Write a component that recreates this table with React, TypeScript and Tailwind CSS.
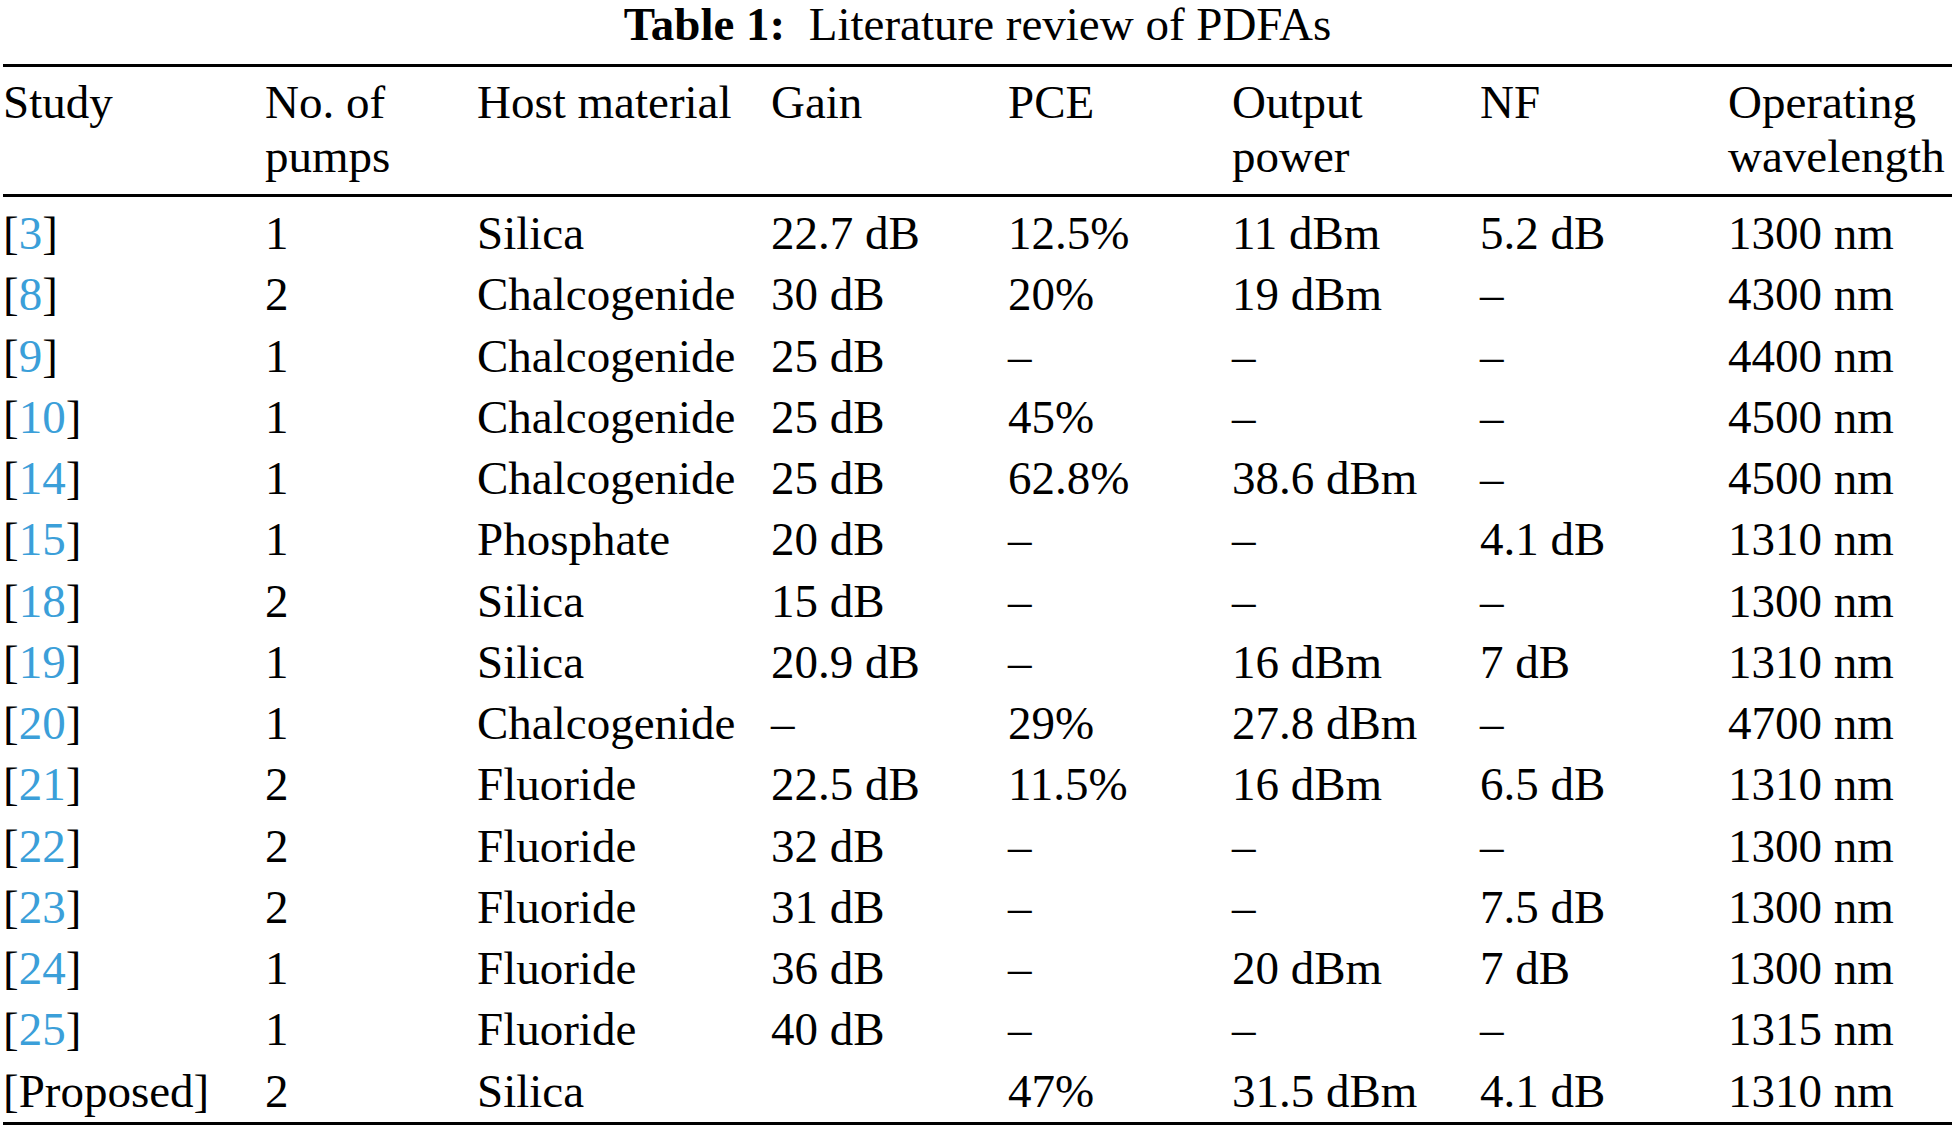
type Row = {
  ref: string;
  link: boolean;
  pumps: string;
  host: string;
  gain: string;
  pce: string;
  output: string;
  nf: string;
  wavelength: string;
};

const D = "\u2013";

const rows: Row[] = [
  { ref: "3", link: true, pumps: "1", host: "Silica", gain: "22.7 dB", pce: "12.5%", output: "11 dBm", nf: "5.2 dB", wavelength: "1300 nm" },
  { ref: "8", link: true, pumps: "2", host: "Chalcogenide", gain: "30 dB", pce: "20%", output: "19 dBm", nf: D, wavelength: "4300 nm" },
  { ref: "9", link: true, pumps: "1", host: "Chalcogenide", gain: "25 dB", pce: D, output: D, nf: D, wavelength: "4400 nm" },
  { ref: "10", link: true, pumps: "1", host: "Chalcogenide", gain: "25 dB", pce: "45%", output: D, nf: D, wavelength: "4500 nm" },
  { ref: "14", link: true, pumps: "1", host: "Chalcogenide", gain: "25 dB", pce: "62.8%", output: "38.6 dBm", nf: D, wavelength: "4500 nm" },
  { ref: "15", link: true, pumps: "1", host: "Phosphate", gain: "20 dB", pce: D, output: D, nf: "4.1 dB", wavelength: "1310 nm" },
  { ref: "18", link: true, pumps: "2", host: "Silica", gain: "15 dB", pce: D, output: D, nf: D, wavelength: "1300 nm" },
  { ref: "19", link: true, pumps: "1", host: "Silica", gain: "20.9 dB", pce: D, output: "16 dBm", nf: "7 dB", wavelength: "1310 nm" },
  { ref: "20", link: true, pumps: "1", host: "Chalcogenide", gain: D, pce: "29%", output: "27.8 dBm", nf: D, wavelength: "4700 nm" },
  { ref: "21", link: true, pumps: "2", host: "Fluoride", gain: "22.5 dB", pce: "11.5%", output: "16 dBm", nf: "6.5 dB", wavelength: "1310 nm" },
  { ref: "22", link: true, pumps: "2", host: "Fluoride", gain: "32 dB", pce: D, output: D, nf: D, wavelength: "1300 nm" },
  { ref: "23", link: true, pumps: "2", host: "Fluoride", gain: "31 dB", pce: D, output: D, nf: "7.5 dB", wavelength: "1300 nm" },
  { ref: "24", link: true, pumps: "1", host: "Fluoride", gain: "36 dB", pce: D, output: "20 dBm", nf: "7 dB", wavelength: "1300 nm" },
  { ref: "25", link: true, pumps: "1", host: "Fluoride", gain: "40 dB", pce: D, output: D, nf: D, wavelength: "1315 nm" },
  { ref: "Proposed", link: false, pumps: "2", host: "Silica", gain: "", pce: "47%", output: "31.5 dBm", nf: "4.1 dB", wavelength: "1310 nm" },
];

// column widths, measured off the reference
const widths = [262, 212, 294, 237, 224, 248, 248, 224];

export default function App() {
  return (
    <div className="min-h-screen bg-white pl-[3px] text-black [font-family:'Liberation_Serif','Times_New_Roman',serif]">
      <div className="w-[1949px]">
        <p className="text-center text-[47px] leading-[48px]">
          <span className="font-bold">Table 1:</span>
          <span className="ml-[0.5em]">Literature review of PDFAs</span>
        </p>
        <table className="mt-[16px] w-full table-fixed border-collapse border-y-[3px] border-black text-[47px]">
          <colgroup>
            {widths.map((w, i) => (
              <col key={i} style={{ width: w }} />
            ))}
          </colgroup>
          <thead>
            <tr className="border-b-[3px] border-black align-top leading-[54px]">
              <th className="pt-[8px] pb-[11px] text-left font-normal">Study</th>
              <th className="pt-[8px] pb-[11px] text-left font-normal">
                No. of
                <br />
                pumps
              </th>
              <th className="pt-[8px] pb-[11px] text-left font-normal">Host material</th>
              <th className="pt-[8px] pb-[11px] text-left font-normal">Gain</th>
              <th className="pt-[8px] pb-[11px] text-left font-normal">PCE</th>
              <th className="pt-[8px] pb-[11px] text-left font-normal">
                Output
                <br />
                power
              </th>
              <th className="pt-[8px] pb-[11px] text-left font-normal">NF</th>
              <th className="pt-[8px] pb-[11px] text-left font-normal whitespace-nowrap">
                Operating
                <br />
                wavelength
              </th>
            </tr>
          </thead>
          <tbody className="leading-[61.25px]">
            {rows.map((r, i) => (
              <tr key={r.ref} className={i === 0 ? "[&>td]:pt-[6px]" : ""}>
                <td className="whitespace-nowrap p-0">
                  [<span className={r.link ? "text-[#3b9fd9]" : ""}>{r.ref}</span>]
                </td>
                <td className="p-0">{r.pumps}</td>
                <td className="whitespace-nowrap p-0">{r.host}</td>
                <td className="whitespace-nowrap p-0">{r.gain}</td>
                <td className="whitespace-nowrap p-0">{r.pce}</td>
                <td className="whitespace-nowrap p-0">{r.output}</td>
                <td className="whitespace-nowrap p-0">{r.nf}</td>
                <td className="whitespace-nowrap p-0">{r.wavelength}</td>
              </tr>
            ))}
          </tbody>
        </table>
      </div>
    </div>
  );
}
